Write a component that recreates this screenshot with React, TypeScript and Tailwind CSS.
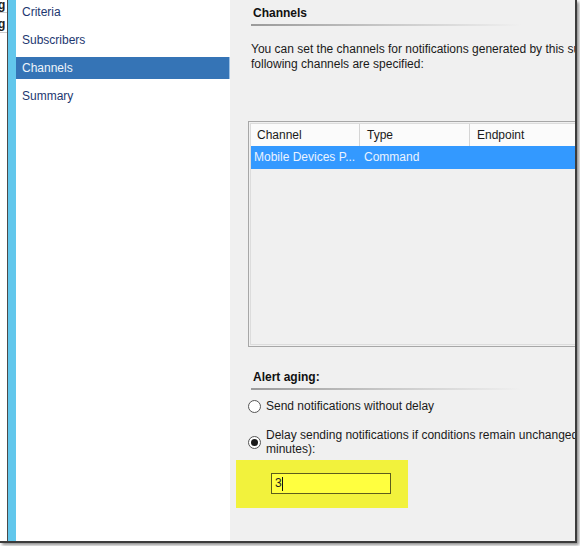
const font = { fontFamily: '"Liberation Sans", Arial, sans-serif' }

function NavItem({ label, active }: { label: string; active?: boolean }) {
  return (
    <div
      className={
        active
          ? 'h-[22px] flex items-center pl-[6px] bg-[#3574b6] text-[#eef4fb] border-r border-[#9cc0e4]'
          : 'h-[22px] flex items-center pl-[6px] text-[#1d3770]'
      }
    >
      {label}
    </div>
  )
}

function SectionTitle({ children }: { children: string }) {
  return (
    <div>
      <div className="pl-[2px] font-bold text-[#111]">{children}</div>
      <div className="mt-[3px] h-[2px] w-[270px] bg-gradient-to-r from-[#9a9a9a] via-[#c8c8c8] to-transparent" />
    </div>
  )
}

function Radio({ checked }: { checked?: boolean }) {
  return (
    <span className="w-[13px] h-[13px] shrink-0 rounded-full border border-[#555] bg-white flex items-center justify-center">
      {checked && <span className="w-[7px] h-[7px] rounded-full bg-[#1a1a1a]" />}
    </span>
  )
}

export default function App() {
  return (
    <div className="w-[580px] h-[546px] bg-white overflow-hidden text-[12px] leading-[15px]" style={font}>
      <div className="w-[577px] h-[543px] flex border-r-2 border-b-2 border-[#3c3c3c] shadow-[2px_2px_3px_rgba(0,0,0,0.45)]">
        {/* clipped window behind */}
        <div className="w-[7px] shrink-0 bg-white overflow-hidden">
          <div className="h-[13px] border-b border-[#cfcfcf] font-bold text-[#222] leading-[10px] -ml-[2px]">g</div>
          <div className="h-[20px] border-b border-[#cfcfcf] font-bold text-[#222] pt-[4px] -ml-[2px]">g</div>
        </div>
        <div className="w-px shrink-0 bg-[#4a4a4a]" />
        <div className="w-[8px] shrink-0 bg-[#62c7ec]" />

        {/* wizard steps */}
        <div className="w-[214px] shrink-0 bg-white pt-px flex flex-col gap-[6px]">
          <NavItem label="Criteria" />
          <NavItem label="Subscribers" />
          <NavItem label="Channels" active />
          <NavItem label="Summary" />
        </div>

        {/* page */}
        <div className="flex-1 bg-[#f0f0f0] overflow-hidden pl-[21px] pt-[6px] text-[#1a1a1a]">
          <SectionTitle>Channels</SectionTitle>
          <p className="mt-[16px] whitespace-nowrap">
            You can set the channels for notifications generated by this subscription. The
            <br />
            following channels are specified:
          </p>

          <div className="mt-[49px] -ml-[3px] w-[340px] h-[226px] border border-[#a7a7a7] p-px bg-[#f0f0f0]">
            <div className="h-full border border-[#dcdcdc] border-r-0">
              <div className="h-[22px] flex bg-[#fbfbfb] text-[#1a1a1a]">
                <div className="w-[109px] pl-[6px] flex items-center border-r border-[#d5d5d5]">Channel</div>
                <div className="w-[110px] pl-[7px] flex items-center border-r border-[#d5d5d5]">Type</div>
                <div className="flex-1 pl-[7px] flex items-center">Endpoint</div>
              </div>
              <div className="h-[23px] flex bg-[#3399ff] text-[#eaf3ff]">
                <div className="w-[109px] pl-[3px] flex items-center whitespace-nowrap">Mobile Devices P...</div>
                <div className="w-[110px] pl-[4px] flex items-center">Command</div>
                <div className="flex-1" />
              </div>
            </div>
          </div>

          <div className="mt-[23px]">
            <SectionTitle>Alert aging:</SectionTitle>
          </div>

          <div className="mt-[9px] -ml-[3px] flex items-center gap-[5px] whitespace-nowrap">
            <Radio />
            <span>Send notifications without delay</span>
          </div>

          <div className="mt-[14px] -ml-[3px] flex items-center gap-[5px] whitespace-nowrap">
            <Radio checked />
            <span className="leading-[14px]">
              Delay sending notifications if conditions remain unchanged for (in
              <br />
              minutes):
            </span>
          </div>

          <div className="mt-[4px] -ml-[15px] w-[172px] h-[48px] bg-[#f2f23c] pt-[13px] pl-[35px]">
            <div className="w-[120px] h-[21px] bg-[#ffff3f] border border-[#5d5d1c] flex items-center pl-[3px] text-[#222]">
              3<span className="w-px h-[14px] bg-[#111]" />
            </div>
          </div>
        </div>
      </div>
    </div>
  )
}
